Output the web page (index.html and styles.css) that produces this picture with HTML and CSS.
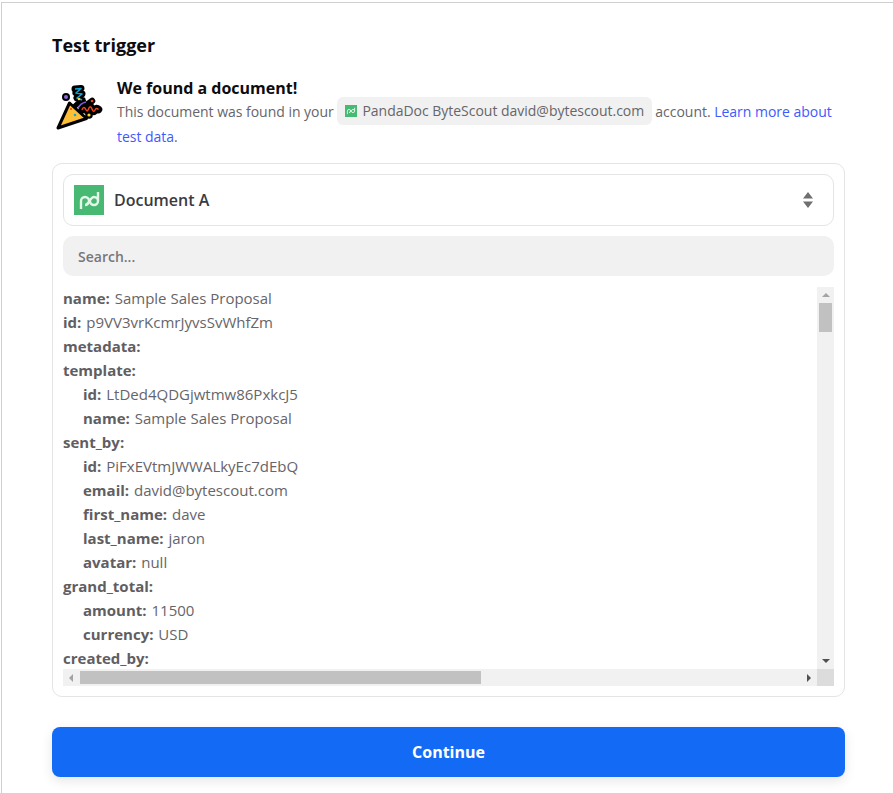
FILE: index.html
```html
<!DOCTYPE html>
<html lang="en">
<head>
<meta charset="utf-8">
<title>Test trigger</title>
<link rel="stylesheet" href="styles.css">
</head>
<body>
<main class="frame">
  <h1 class="title">Test trigger</h1>
  <section class="notice">
    <svg class="party" width="48" height="48" viewBox="0 0 48 48" aria-hidden="true">
      <g fill="none" stroke="#000" stroke-linecap="round" stroke-linejoin="round">
        <path d="M20 5l6-.5-5 4.500 6 1-5 4 5 2" stroke-width="7"/>
        <path d="M18 25c2-4 6-7 11-7" stroke-width="5"/>
        <path d="M27 26c1-3 2.500-3 3.500-1s2 3 3 0 2.500-3 3.500 0 2 3 3 1 2-2 3.500-.5" stroke-width="7.500"/>
        <path d="M33 20l4-3" stroke-width="6.500"/>
      </g>
      <circle cx="11" cy="13" r="4" fill="#000"/>
      <circle cx="34" cy="31" r="3.800" fill="#000"/>
      <path d="M3 44L14.500 19 31.500 34.500z" fill="#fcbf35" stroke="#000" stroke-width="3" stroke-linejoin="round"/>
      <path d="M20 5l6-.5-5 4.500 6 1-5 4 5 2" fill="none" stroke="#12a5d8" stroke-width="1.600" stroke-linejoin="round"/>
      <path d="M23 24c1.500-3 4-5 8-6" fill="none" stroke="#7b5bd6" stroke-width="1.400"/>
      <path d="M27 26c1-3 2.500-3 3.500-1s2 3 3 0 2.500-3 3.500 0 2 3 3 1 2-2 3.500-.5" fill="none" stroke="#f0441f" stroke-width="1.500"/>
      <circle cx="11" cy="13" r="2" fill="#8c6bd8"/>
      <circle cx="24" cy="15" r="1.300" fill="#ffd21f"/>
      <circle cx="37" cy="17" r="1.300" fill="#f0441f"/>
      <circle cx="34" cy="31" r="1.600" fill="#ffd21f"/>
      <circle cx="16" cy="25" r="1.100" fill="#f0441f"/>
      <circle cx="20" cy="31" r="1.300" fill="#12a5d8"/>
    </svg>
    <div class="notice-body">
      <h2 class="notice-title">We found a document!</h2>
      <p class="notice-text">This document was found in your <span class="chip"><svg class="chip-logo" viewBox="0 0 30 30" aria-hidden="true"><rect width="30" height="30" fill="#47b972"/><path d="M6 23v-8a4 4 0 1 1 4 4c4 0 6-8 10-8a4 4 0 1 1-4 4M24 7v8" fill="none" stroke="#dff3e6" stroke-width="2.400"/></svg>PandaDoc ByteScout david@bytescout.com</span> account. <a class="link" href="#">Learn more about test data</a>.</p>
    </div>
  </section>

  <section class="card">
    <div class="select">
      <svg class="select-logo" viewBox="0 0 30 30" aria-hidden="true"><rect width="30" height="30" fill="#47b972"/><path d="M7 24v-8a4 4 0 1 1 4 4c4 0 5-8 9-8a4 4 0 1 1-4 4M24 7v9" fill="none" stroke="#e4f5ea" stroke-width="2.400"/></svg>
      <span class="select-name">Document A</span>
      <svg class="updown" width="10" height="16" viewBox="0 0 10 16" aria-hidden="true"><path d="M5 0l5 6.500H0zM5 16l5-6.500H0z" fill="#6f6e70"/></svg>
    </div>
    <div class="search">Search...</div>
    <div class="scroller">
      <div class="viewport">
        <div class="row"><b>name:</b> Sample Sales Proposal</div>
        <div class="row"><b>id:</b> p9VV3vrKcmrJyvsSvWhfZm</div>
        <div class="row"><b>metadata:</b></div>
        <div class="row"><b>template:</b></div>
        <div class="row nested"><b>id:</b> LtDed4QDGjwtmw86PxkcJ5</div>
        <div class="row nested"><b>name:</b> Sample Sales Proposal</div>
        <div class="row"><b>sent_by:</b></div>
        <div class="row nested"><b>id:</b> PiFxEVtmJWWALkyEc7dEbQ</div>
        <div class="row nested"><b>email:</b> david@bytescout.com</div>
        <div class="row nested"><b>first_name:</b> dave</div>
        <div class="row nested"><b>last_name:</b> jaron</div>
        <div class="row nested"><b>avatar:</b> null</div>
        <div class="row"><b>grand_total:</b></div>
        <div class="row nested"><b>amount:</b> 11500</div>
        <div class="row nested"><b>currency:</b> USD</div>
        <div class="row"><b>created_by:</b></div>
      </div>
      <div class="vbar">
        <span class="arrow up"></span>
        <span class="vthumb"></span>
        <span class="arrow down"></span>
      </div>
      <div class="hbar">
        <span class="arrow left"></span>
        <span class="hthumb"></span>
        <span class="arrow right"></span>
      </div>
      <div class="corner"></div>
    </div>
  </section>

  <button class="continue" type="button">Continue</button>
</main>
</body>
</html>
```
FILE: styles.css
```css
* { box-sizing: border-box; }
html, body { margin: 0; height: 100%; background: #fff; }
body {
  font-family: "Open Sans", "Liberation Sans", sans-serif;
  color: #000;
  overflow: hidden;
}
.frame {
  margin: 2px 0 0 1px;
  height: 791px;
  border-top: 1px solid #cfcfcf;
  border-left: 1px solid #cfcfcf;
  padding: 30px 48px 0 50px;
}
.title {
  margin: 0;
  font-size: 18px;
  line-height: 24px;
  font-weight: 700;
  color: #0d0c0e;
}
.notice {
  display: flex;
  margin-top: 21px;
}
.party { flex: none; margin: 6px 14px 0 3px; width: 48px; height: 48px; }
.notice-body { flex: 1; min-width: 0; }
.notice-title {
  margin: 0;
  font-size: 16px;
  line-height: 20px;
  font-weight: 700;
  color: #0d0c0e;
}
.notice-text {
  margin: 1px 0 0;
  font-size: 14px;
  line-height: 25px;
  letter-spacing: -.02px;
  color: #666569;
}
.chip {
  display: inline-flex;
  align-items: center;
  height: 28px;
  margin: -3px 0;
  padding: 0 7.500px 0 8px;
  border-radius: 6px;
  background: #f1f1f1;
  vertical-align: baseline;
  line-height: 28px;
}
.chip-logo { width: 12px; height: 12px; margin-right: 5px; }
.link { color: #3d5afe; text-decoration: none; }
.card {
  margin-top: 14px;
  height: 534px;
  border: 1px solid #e4e4e4;
  border-radius: 10px;
  padding: 10px;
}
.select {
  display: flex;
  align-items: center;
  height: 52px;
  padding: 0 20px 0 10px;
  border: 1px solid #e4e4e4;
  border-radius: 10px;
}
.select-logo { width: 30px; height: 30px; flex: none; }
.select-name {
  flex: 1;
  margin-left: 10px;
  font-size: 16px;
  font-weight: 550;
  color: #3b3a40;
}
.search {
  display: flex;
  align-items: center;
  height: 40px;
  margin-top: 10px;
  padding: 0 15px;
  border-radius: 10px;
  background: #f1f1f1;
  font-size: 14px;
  font-weight: 600;
  color: #77767a;
}
.scroller {
  display: grid;
  grid-template-columns: 754px 17px;
  grid-template-rows: 382px 17px;
  margin-top: 11px;
  height: 399px;
}
.viewport {
  overflow: hidden;
  height: 400px;
  margin-top: -1px;
  grid-column: 1;
  grid-row: 1 / 3;
  font-size: 15px;
  line-height: 24px;
  color: #666569;
}
.row { white-space: nowrap; }
.row b { font-weight: 700; color: #5f5e62; margin-right: 1px; }
.nested { padding-left: 20px; }
.vbar {
  grid-column: 2;
  grid-row: 1;
  display: flex;
  flex-direction: column;
  align-items: center;
  background: #f1f1f1;
  padding: 0 1px;
}
.vthumb { display: block; width: 13px; height: 29px; margin-top: 6px; background: #c1c1c1; }
.hbar {
  grid-column: 1;
  grid-row: 2;
  position: relative;
  z-index: 1;
  display: flex;
  align-items: center;
  background: #f1f1f1;
}
.hthumb { display: block; width: 401px; height: 13px; margin-left: 7px; background: #c1c1c1; }
.corner { grid-column: 2; grid-row: 2; background: #dcdcdc; }
.arrow { display: block; width: 0; height: 0; border-style: solid; border-color: transparent; flex: none; }
.up { margin-top: 6px; border-width: 0 4px 4px; border-bottom-color: #a3a3a3; }
.down { margin-top: auto; margin-bottom: 6px; border-width: 4px 4px 0; border-top-color: #505050; }
.left { margin-left: 6px; border-width: 4px 4px 4px 0; border-right-color: #a3a3a3; }
.right { margin-left: auto; margin-right: 6px; border-width: 4px 0 4px 4px; border-left-color: #505050; }
.continue {
  display: block;
  width: 100%;
  height: 50px;
  margin-top: 30px;
  border: 0;
  border-radius: 8px;
  background: #136bf5;
  color: #fff;
  font: 700 16px "Open Sans", "Liberation Sans", sans-serif;
  box-shadow: 0 4px 12px rgba(0, 0, 0, .1);
}
```
